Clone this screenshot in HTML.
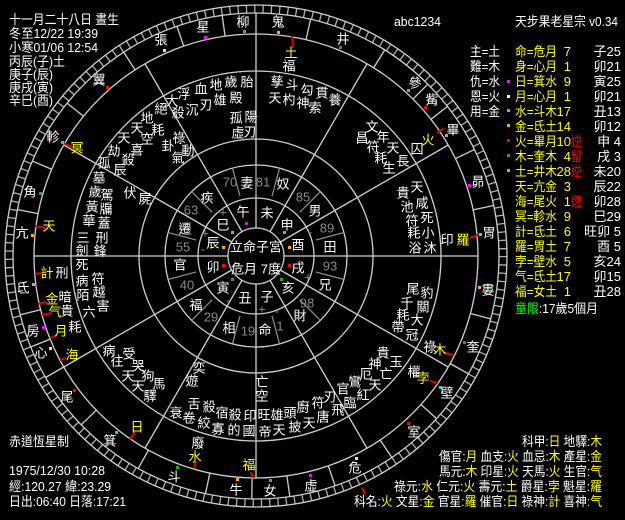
<!DOCTYPE html>
<html><head><meta charset="utf-8"><style>
html,body{margin:0;padding:0;background:#000;}
svg{display:block}
text{font-family:"Liberation Sans","WenQuanYi Zen Hei","Noto Sans CJK TC",sans-serif;font-size:13px;fill:#fff}
.c text{text-anchor:middle;dominant-baseline:central}
.y,.y text{fill:#ff0}.g,.g text{fill:#888}.r,.r text{fill:#f00}.gr{fill:#0f0}
</style></head><body>
<svg width="625" height="520" viewBox="0 0 625 520" xmlns="http://www.w3.org/2000/svg">
<rect width="625" height="520" fill="#000"/>
<g fill="none" stroke="#cfcfcf" stroke-width="1.3">
<circle cx="256" cy="256" r="251"/>
<circle cx="256" cy="256" r="243"/>
<circle cx="256" cy="256" r="247" stroke-width="8" stroke-dasharray="1.3 7" opacity="0.85"/>
<circle cx="256" cy="256" r="222"/>
<circle cx="256" cy="256" r="185"/>
<circle cx="256" cy="256" r="117"/>
<circle cx="256" cy="256" r="91"/>
<circle cx="256" cy="256" r="58"/>
<circle cx="256" cy="256" r="28"/>
</g>
<g stroke="#cfcfcf" stroke-width="1.3">
<g id="hl"><line x1="256" y1="228" x2="256" y2="34"/></g>
<use href="#hl" transform="rotate(30 256 256)"/>
<use href="#hl" transform="rotate(60 256 256)"/>
<use href="#hl" transform="rotate(90 256 256)"/>
<use href="#hl" transform="rotate(120 256 256)"/>
<use href="#hl" transform="rotate(150 256 256)"/>
<use href="#hl" transform="rotate(180 256 256)"/>
<use href="#hl" transform="rotate(210 256 256)"/>
<use href="#hl" transform="rotate(240 256 256)"/>
<use href="#hl" transform="rotate(270 256 256)"/>
<use href="#hl" transform="rotate(300 256 256)"/>
<use href="#hl" transform="rotate(330 256 256)"/>
<g id="ml"><line x1="256" y1="34" x2="256" y2="13"/></g>
<use href="#ml" transform="rotate(13 256 256)"/><use href="#ml" transform="rotate(32 256 256)"/>
<use href="#ml" transform="rotate(45 256 256)"/><use href="#ml" transform="rotate(52 256 256)"/>
<use href="#ml" transform="rotate(64 256 256)"/><use href="#ml" transform="rotate(78 256 256)"/>
<use href="#ml" transform="rotate(105 256 256)"/>
<use href="#ml" transform="rotate(119 256 256)"/><use href="#ml" transform="rotate(132 256 256)"/>
<use href="#ml" transform="rotate(146 256 256)"/><use href="#ml" transform="rotate(161 256 256)"/>
<use href="#ml" transform="rotate(172 256 256)"/><use href="#ml" transform="rotate(181 256 256)"/>
<use href="#ml" transform="rotate(192 256 256)"/><use href="#ml" transform="rotate(209 256 256)"/>
<use href="#ml" transform="rotate(226 256 256)"/><use href="#ml" transform="rotate(240 256 256)"/>
<use href="#ml" transform="rotate(248 256 256)"/><use href="#ml" transform="rotate(256 256 256)"/>
<use href="#ml" transform="rotate(281 256 256)"/>
<use href="#ml" transform="rotate(293 256 256)"/><use href="#ml" transform="rotate(309 256 256)"/>
<use href="#ml" transform="rotate(327 256 256)"/><use href="#ml" transform="rotate(341 256 256)"/>
<use href="#ml" transform="rotate(352 256 256)"/>
</g>
<g stroke="#888" stroke-width="1.3">
<g id="gl"><line x1="256" y1="194" x2="256" y2="166"/></g>
<use href="#gl" transform="rotate(-15 256 256)"/><use href="#gl" transform="rotate(15 256 256)"/>
<use href="#gl" transform="rotate(45 256 256)"/><use href="#gl" transform="rotate(75 256 256)"/>
<use href="#gl" transform="rotate(105 256 256)"/><use href="#gl" transform="rotate(135 256 256)"/>
<use href="#gl" transform="rotate(165 256 256)"/><use href="#gl" transform="rotate(195 256 256)"/>
<use href="#gl" transform="rotate(225 256 256)"/><use href="#gl" transform="rotate(255 256 256)"/>
<use href="#gl" transform="rotate(285 256 256)"/><use href="#gl" transform="rotate(315 256 256)"/>
</g>
<g stroke="#e00000" stroke-width="2">
<line x1="292" y1="36" x2="293" y2="48"/>
<line x1="63" y1="143" x2="75" y2="148"/>
<line x1="35" y1="226" x2="46" y2="228"/>
<line x1="437" y1="133" x2="444" y2="128"/>
<line x1="470" y1="238" x2="478" y2="235"/>
<line x1="35" y1="274" x2="43" y2="273"/>
<line x1="38" y1="304" x2="46" y2="302"/>
<line x1="42" y1="315" x2="52" y2="313"/>
<line x1="50" y1="338" x2="57" y2="335"/>
<line x1="60" y1="360" x2="66" y2="358"/>
<line x1="130" y1="439" x2="135" y2="432"/>
<line x1="194" y1="468" x2="196" y2="462"/>
<line x1="251" y1="472" x2="253" y2="478"/>
<line x1="443" y1="352" x2="453" y2="355"/>
<line x1="430" y1="381" x2="438" y2="383"/>
<line x1="362" y1="488" x2="365" y2="494"/>
</g>
<g>
<rect x="204" y="36" width="3" height="3" fill="#f0f"/><rect x="243" y="30" width="3" height="3" fill="#888"/>
<rect x="277" y="31" width="3" height="3" fill="#fa0"/><rect x="163" y="49" width="3" height="3" fill="#ddd"/>
<rect x="106" y="86" width="3" height="3" fill="#f00"/><rect x="61" y="141" width="3" height="3" fill="#0dd"/>
<rect x="39" y="192" width="3" height="3" fill="#2a2"/><rect x="31" y="234" width="3" height="3" fill="#fa0"/>
<rect x="339" y="46" width="3" height="3" fill="#2a2"/><rect x="407" y="89" width="3" height="3" fill="#0dd"/>
<rect x="424" y="106" width="3" height="3" fill="#f00"/><rect x="445" y="134" width="3" height="3" fill="#aaa"/>
<rect x="468" y="184" width="3" height="3" fill="#f0f"/><rect x="479" y="233" width="3" height="3" fill="#aaa"/>
<rect x="478" y="286" width="3" height="3" fill="#fa0"/><rect x="463" y="341" width="3" height="3" fill="#2a2"/>
<rect x="439" y="386" width="3" height="3" fill="#0dd"/><rect x="407" y="422" width="3" height="3" fill="#f00"/>
<rect x="355" y="457" width="3" height="3" fill="#ddd"/><rect x="309" y="474" width="3" height="3" fill="#f0f"/>
<rect x="269" y="479" width="3" height="3" fill="#888"/><rect x="236" y="478" width="3" height="3" fill="#fa0"/>
<rect x="176" y="466" width="3" height="3" fill="#2a2"/><rect x="115" y="431" width="3" height="3" fill="#0dd"/>
<rect x="73" y="389" width="3" height="3" fill="#f00"/><rect x="49" y="347" width="3" height="3" fill="#ddd"/>
<rect x="42" y="326" width="3" height="3" fill="#f0f"/><rect x="32" y="283" width="3" height="3" fill="#aaa"/>
<rect x="245" y="222" width="3" height="3" fill="#f0f"/><rect x="231" y="231" width="3" height="3" fill="#0dd"/>
<rect x="283" y="231" width="3" height="3" fill="#0dd"/><rect x="222" y="246" width="3" height="3" fill="#fa0"/>
<rect x="288" y="246" width="3" height="3" fill="#fa0"/><rect x="222" y="264" width="3" height="3" fill="#f00"/>
<rect x="288" y="264" width="3" height="3" fill="#f00"/><rect x="231" y="278" width="3" height="3" fill="#2a2"/>
<rect x="280" y="278" width="3" height="3" fill="#2a2"/>
<rect x="507" y="80" width="3" height="3" fill="#f0f"/><rect x="507" y="95" width="3" height="3" fill="#fff"/>
<rect x="507" y="109" width="3" height="3" fill="#0dd"/><rect x="507" y="124" width="3" height="3" fill="#fa0"/>
<rect x="507" y="139" width="3" height="3" fill="#f00"/><rect x="507" y="154" width="3" height="3" fill="#2a2"/>
<rect x="507" y="169" width="3" height="3" fill="#aaa"/>
</g>
<g class="c">
<text x="203" y="27">星</text><text x="243" y="22">柳</text><text x="278" y="22">鬼</text><text x="161" y="40">張</text>
<text x="99" y="80">翼</text><text x="53" y="137">軫</text><text x="30" y="192">角</text><text x="22" y="233">亢</text>
<text x="343" y="39">井</text><text x="415" y="83">參</text><text x="432" y="100">觜</text><text x="453" y="130">畢</text>
<text x="478" y="182">昴</text><text x="489" y="233">胃</text><text x="488" y="290">婁</text><text x="473" y="347">奎</text>
<text x="447" y="393">壁</text><text x="414" y="432">室</text><text x="355" y="468">危</text><text x="311" y="486">虛</text>
<text x="270" y="491">女</text><text x="236" y="490">牛</text><text x="174" y="477">斗</text><text x="110" y="441">箕</text>
<text x="67" y="397">尾</text><text x="41" y="353">心</text><text x="33" y="331">房</text><text x="23" y="288">氐</text>
<text class="y" x="291" y="53">土</text><text x="289" y="66">福</text>
<text class="y" x="77" y="148">冥</text><text class="y" x="49" y="226">天</text>
<text class="y" x="428" y="140">火</text><text x="417" y="149">囚</text>
<text x="447" y="240">印</text><text class="y" x="463" y="240">羅</text>
<text class="y" x="47" y="273">計</text><text x="62" y="273">刑</text>
<text class="y" x="52" y="299">金</text><text x="65" y="297">暗</text>
<text class="y" x="55" y="312">气</text><text x="67" y="311">貴</text>
<text class="y" x="61" y="331">月</text><text x="75" y="327">耗</text>
<text class="y" x="72" y="355">海</text>
<text class="y" x="137" y="427">日</text>
<text x="198" y="443">廢</text><text class="y" x="195" y="457">水</text>
<text class="y" x="249" y="465">福</text>
<text x="430" y="347">祿</text><text class="y" x="440" y="350">木</text>
<text x="414" y="372">權</text><text class="y" x="423" y="378">孛</text>
<text x="216" y="85">地</text><text x="231" y="82">歲</text><text x="247" y="82">胎</text>
<text x="201" y="89">血</text><text x="184" y="94">浮</text><text x="172" y="101">大</text>
<text x="220" y="100">雄</text><text x="236" y="98">殿</text><text x="206" y="105">刃</text><text x="192" y="110">沉</text>
<text x="178" y="113">殺</text><text x="161" y="109">絕</text>
<text x="236" y="118">孤</text><text x="251" y="117">陽</text><text x="238" y="133">虛</text><text x="250" y="132">刃</text>
<text x="147" y="118">地</text><text x="137" y="128">天</text><text x="158" y="130">耗</text>
<text x="124" y="138">天</text><text x="147" y="139">空</text><text x="137" y="150">喜</text>
<text x="114" y="151">劫</text><text x="128" y="160">殺</text><text x="104" y="163">孤</text><text x="120" y="170">辰</text>
<text x="179" y="138">祿</text><text x="168" y="146">卦</text><text x="188" y="151">動</text><text x="178" y="158">氣</text>
<text x="99" y="178">墓</text><text x="95" y="192">歲</text><text x="107" y="195">駕</text>
<text x="92" y="207">黃</text><text x="106" y="209">牖</text><text x="89" y="221">華</text><text x="104" y="223">蓋</text>
<text x="83" y="238">三</text><text x="102" y="238">刑</text><text x="82" y="251">劍</text><text x="100" y="251">鋒</text>
<text x="130" y="193">伏</text><text x="145" y="199">屍</text>
<text x="277" y="82">孳</text><text x="292" y="85">斗</text><text x="307" y="90">勾</text><text x="322" y="93">貫</text><text x="335" y="100">養</text>
<text x="275" y="98">天</text><text x="289" y="100">杓</text><text x="303" y="103">神</text><text x="315" y="108">索</text>
<text x="372" y="127">文</text><text x="383" y="137">年</text><text x="362" y="138">昌</text><text x="373" y="147">符</text>
<text x="393" y="148">天</text><text x="381" y="158">耗</text><text x="403" y="161">長</text><text x="389" y="168">生</text>
<text x="417" y="187">天</text><text x="403" y="193">貴</text><text x="422" y="203">咸</text><text x="407" y="207">池</text>
<text x="427" y="218">死</text><text x="412" y="221">符</text><text x="428" y="233">小</text><text x="414" y="233">耗</text>
<text x="430" y="248">沐</text><text x="415" y="248">浴</text>
<text x="82" y="265">死</text><text x="98" y="279">符</text><text x="82" y="281">病</text><text x="99" y="292">越</text>
<text x="83" y="295">陌</text><text x="89" y="312">六</text><text x="103" y="306">害</text>
<text x="109" y="351">病</text><text x="129" y="354">受</text><text x="117" y="361">往</text><text x="138" y="366">哭</text>
<text x="128" y="376">天</text><text x="148" y="376">狗</text><text x="138" y="386">天</text><text x="159" y="384">馬</text><text x="150" y="396">驛</text>
<text x="199" y="368">奕</text><text x="192" y="381">遊</text>
<text x="194" y="404">舌</text><text x="209" y="407">殺</text><text x="222" y="413">宿</text><text x="235" y="415">殺</text><text x="250" y="416">印</text>
<text x="176" y="413">衰</text><text x="189" y="418">卷</text><text x="204" y="423">絞</text><text x="218" y="429">寡</text><text x="234" y="430">的</text><text x="249" y="431">國</text>
<text x="413" y="289">尾</text><text x="427" y="293">豹</text><text x="407" y="303">千</text><text x="423" y="307">關</text>
<text x="403" y="315">耗</text><text x="417" y="320">大</text><text x="398" y="327">帶</text><text x="412" y="335">冠</text>
<text x="383" y="353">貴</text><text x="396" y="362">玉</text><text x="375" y="364">神</text><text x="386" y="374">亡</text>
<text x="366" y="374">厄</text><text x="375" y="385">天</text>
<text x="355" y="382">鸞</text><text x="343" y="389">官</text><text x="363" y="395">紅</text><text x="330" y="397">刃</text>
<text x="318" y="403">符</text><text x="350" y="403">臨</text><text x="303" y="407">廚</text><text x="338" y="410">飛</text>
<text x="290" y="413">頭</text><text x="323" y="417">唐</text><text x="277" y="415">雄</text><text x="309" y="423">天</text>
<text x="295" y="427">披</text><text x="264" y="415">旺</text><text x="279" y="430">天</text><text x="265" y="432">帝</text>
<text x="262" y="382">亡</text><text x="262" y="396">空</text>
<text x="247" y="183">妻</text><text x="283" y="184">奴</text><text x="315" y="211">男</text><text x="330" y="247">田</text>
<text x="325" y="285">兄</text><text x="300" y="316">財</text><text x="265" y="330">命</text><text x="229" y="328">相</text>
<text x="196" y="305">福</text><text x="180" y="265">官</text><text x="185" y="229">遷</text><text x="207" y="198">疾</text>
<g class="g">
<text x="230" y="182">70</text><text x="263" y="182">81</text><text x="303" y="197">85</text><text x="327" y="228">89</text>
<text x="330" y="266">93</text><text x="307" y="303">98</text><text x="280" y="326">1</text><text x="248" y="331">19</text>
<text x="211" y="317">29</text><text x="187" y="285">40</text><text x="183" y="247">55</text><text x="191" y="210">63</text>
<text x="223" y="212">+</text><text x="205" y="233">+</text><text x="203" y="249">-</text><text x="310" y="232">-</text>
<text x="308" y="277">+</text><text x="228" y="300">-</text><text x="262" y="309">+</text><text x="277" y="311">-</text>
</g>
<text x="243" y="212">午</text><text x="267" y="213">未</text><text x="287" y="225">申</text><text x="298" y="245">酉</text>
<text x="298" y="268">戌</text><text x="288" y="288">亥</text><text x="267" y="297">子</text><text x="245" y="298">丑</text>
<text x="223" y="288">寅</text><text x="213" y="267">卯</text><text x="213" y="243">辰</text><text x="223" y="225">巳</text>
<text x="256" y="247" textLength="52" lengthAdjust="spacingAndGlyphs">立命子宮</text>
<text x="256" y="269" textLength="50" lengthAdjust="spacingAndGlyphs">危月 7度</text>
</g>
<g>
<text x="9" y="24" textLength="110" lengthAdjust="spacingAndGlyphs">十一月二十八日 晝生</text>
<text x="9" y="38" textLength="89" lengthAdjust="spacingAndGlyphs">冬至12/22 19:39</text>
<text x="9" y="52" textLength="89" lengthAdjust="spacingAndGlyphs">小寒01/06 12:54</text>
<text x="9" y="66" textLength="56" lengthAdjust="spacingAndGlyphs">丙辰(子)土</text>
<text x="9" y="79" textLength="44" lengthAdjust="spacingAndGlyphs">庚子(辰)</text>
<text x="9" y="92" textLength="44" lengthAdjust="spacingAndGlyphs">庚戌(寅)</text>
<text x="9" y="105" textLength="44" lengthAdjust="spacingAndGlyphs">辛巳(酉)</text>
<text x="9" y="446" textLength="60" lengthAdjust="spacingAndGlyphs">赤道恆星制</text>
<text x="9" y="475" textLength="96" lengthAdjust="spacingAndGlyphs">1975/12/30 10:28</text>
<text x="9" y="491" textLength="102" lengthAdjust="spacingAndGlyphs">經:120.27 緯:23.29</text>
<text x="9" y="506" textLength="117" lengthAdjust="spacingAndGlyphs">日出:06:40 日落:17:21</text>
<text x="394" y="26" textLength="47" lengthAdjust="spacingAndGlyphs">abc1234</text>
<text x="515" y="26" textLength="103" lengthAdjust="spacingAndGlyphs">天步果老星宗 v0.34</text>
</g>
<g>
<text x="470" y="56" textLength="30" lengthAdjust="spacingAndGlyphs">主=土</text><text x="470" y="71" textLength="30" lengthAdjust="spacingAndGlyphs">難=木</text><text x="470" y="86" textLength="30" lengthAdjust="spacingAndGlyphs">仇=水</text><text x="470" y="101" textLength="30" lengthAdjust="spacingAndGlyphs">恩=火</text><text x="470" y="116" textLength="30" lengthAdjust="spacingAndGlyphs">用=金</text>
</g>
<g class="y">
<text x="515" y="56" textLength="42" lengthAdjust="spacingAndGlyphs">命=危月</text><text x="515" y="71" textLength="42" lengthAdjust="spacingAndGlyphs">身=心月</text><text x="515" y="86" textLength="42" lengthAdjust="spacingAndGlyphs">日=箕水</text><text x="515" y="101" textLength="42" lengthAdjust="spacingAndGlyphs">月=心月</text>
<text x="515" y="116" textLength="42" lengthAdjust="spacingAndGlyphs">水=斗木</text><text x="515" y="131" textLength="42" lengthAdjust="spacingAndGlyphs">金=氐土</text><text x="515" y="146" textLength="42" lengthAdjust="spacingAndGlyphs">火=畢月</text><text x="515" y="161" textLength="42" lengthAdjust="spacingAndGlyphs">木=奎木</text>
<text x="515" y="176" textLength="42" lengthAdjust="spacingAndGlyphs">土=井木</text><text x="515" y="191" textLength="42" lengthAdjust="spacingAndGlyphs">天=亢金</text><text x="515" y="206" textLength="42" lengthAdjust="spacingAndGlyphs">海=尾火</text><text x="515" y="221" textLength="42" lengthAdjust="spacingAndGlyphs">冥=軫水</text>
<text x="515" y="236" textLength="42" lengthAdjust="spacingAndGlyphs">計=氐土</text><text x="515" y="251" textLength="42" lengthAdjust="spacingAndGlyphs">羅=胃土</text><text x="515" y="266" textLength="42" lengthAdjust="spacingAndGlyphs">孛=壁水</text><text x="515" y="281" textLength="42" lengthAdjust="spacingAndGlyphs">气=氐土</text>
<text x="515" y="296" textLength="42" lengthAdjust="spacingAndGlyphs">福=女土</text>
</g>
<g class="y" text-anchor="end">
<text x="571" y="56">7</text><text x="571" y="71">1</text><text x="571" y="86">9</text><text x="571" y="101">1</text>
<text x="571" y="116">17</text><text x="571" y="131">14</text><text x="571" y="146">10</text><text x="571" y="161">4</text>
<text x="571" y="176">28</text><text x="571" y="191">3</text><text x="571" y="206">1</text><text x="571" y="221">9</text>
<text x="571" y="236">6</text><text x="571" y="251">7</text><text x="571" y="266">5</text><text x="571" y="281">17</text>
<text x="571" y="296">1</text>
</g>
<g class="r"><text x="571" y="146" textLength="11" lengthAdjust="spacingAndGlyphs">逆</text><text x="571" y="161" textLength="11" lengthAdjust="spacingAndGlyphs">留</text><text x="571" y="176" textLength="11" lengthAdjust="spacingAndGlyphs">逆</text><text x="571" y="206" textLength="11" lengthAdjust="spacingAndGlyphs">速</text></g>
<g text-anchor="end">
<text x="621" y="56">子25</text><text x="621" y="71">卯21</text><text x="621" y="86">寅25</text><text x="621" y="101">卯21</text>
<text x="621" y="116">丑13</text><text x="621" y="131">卯12</text><text x="621" y="146">申 4</text><text x="621" y="161">戌 3</text>
<text x="621" y="176">未20</text><text x="621" y="191">辰22</text><text x="621" y="206">卯28</text><text x="621" y="221">巳29</text>
<text x="621" y="236">旺卯 5</text><text x="621" y="251">酉 5</text><text x="621" y="266">亥24</text><text x="621" y="281">卯15</text>
<text x="621" y="296">丑28</text>
</g>
<text x="515" y="313" textLength="83" lengthAdjust="spacingAndGlyphs"><tspan class="gr">童限</tspan>:17歲5個月</text>
<g>
<text x="522" y="446" textLength="80" lengthAdjust="spacingAndGlyphs">科甲:<tspan class="y">日</tspan> 地驛:<tspan class="y">木</tspan></text>
<text x="439" y="461" textLength="163" lengthAdjust="spacingAndGlyphs">傷官:<tspan class="y">月</tspan> 血支:<tspan class="y">火</tspan> 血忌:<tspan class="y">木</tspan> 產星:<tspan class="y">金</tspan></text>
<text x="439" y="476" textLength="163" lengthAdjust="spacingAndGlyphs">馬元:<tspan class="y">木</tspan> 印星:<tspan class="y">火</tspan> 天馬:<tspan class="y">火</tspan> 生官:<tspan class="y">气</tspan></text>
<text x="394" y="491" textLength="208" lengthAdjust="spacingAndGlyphs">祿元:<tspan class="y">水</tspan> 仁元:<tspan class="y">火</tspan> 壽元:<tspan class="y">土</tspan> 爵星:<tspan class="y">孛</tspan> 魁星:<tspan class="y">羅</tspan></text>
<text x="354" y="506" textLength="248" lengthAdjust="spacingAndGlyphs">科名:<tspan class="y">火</tspan> 文星:<tspan class="y">金</tspan> 官星:<tspan class="y">羅</tspan> 催官:<tspan class="y">日</tspan> 祿神:<tspan class="y">計</tspan> 喜神:<tspan class="y">气</tspan></text>
</g>
</svg>
</body></html>
